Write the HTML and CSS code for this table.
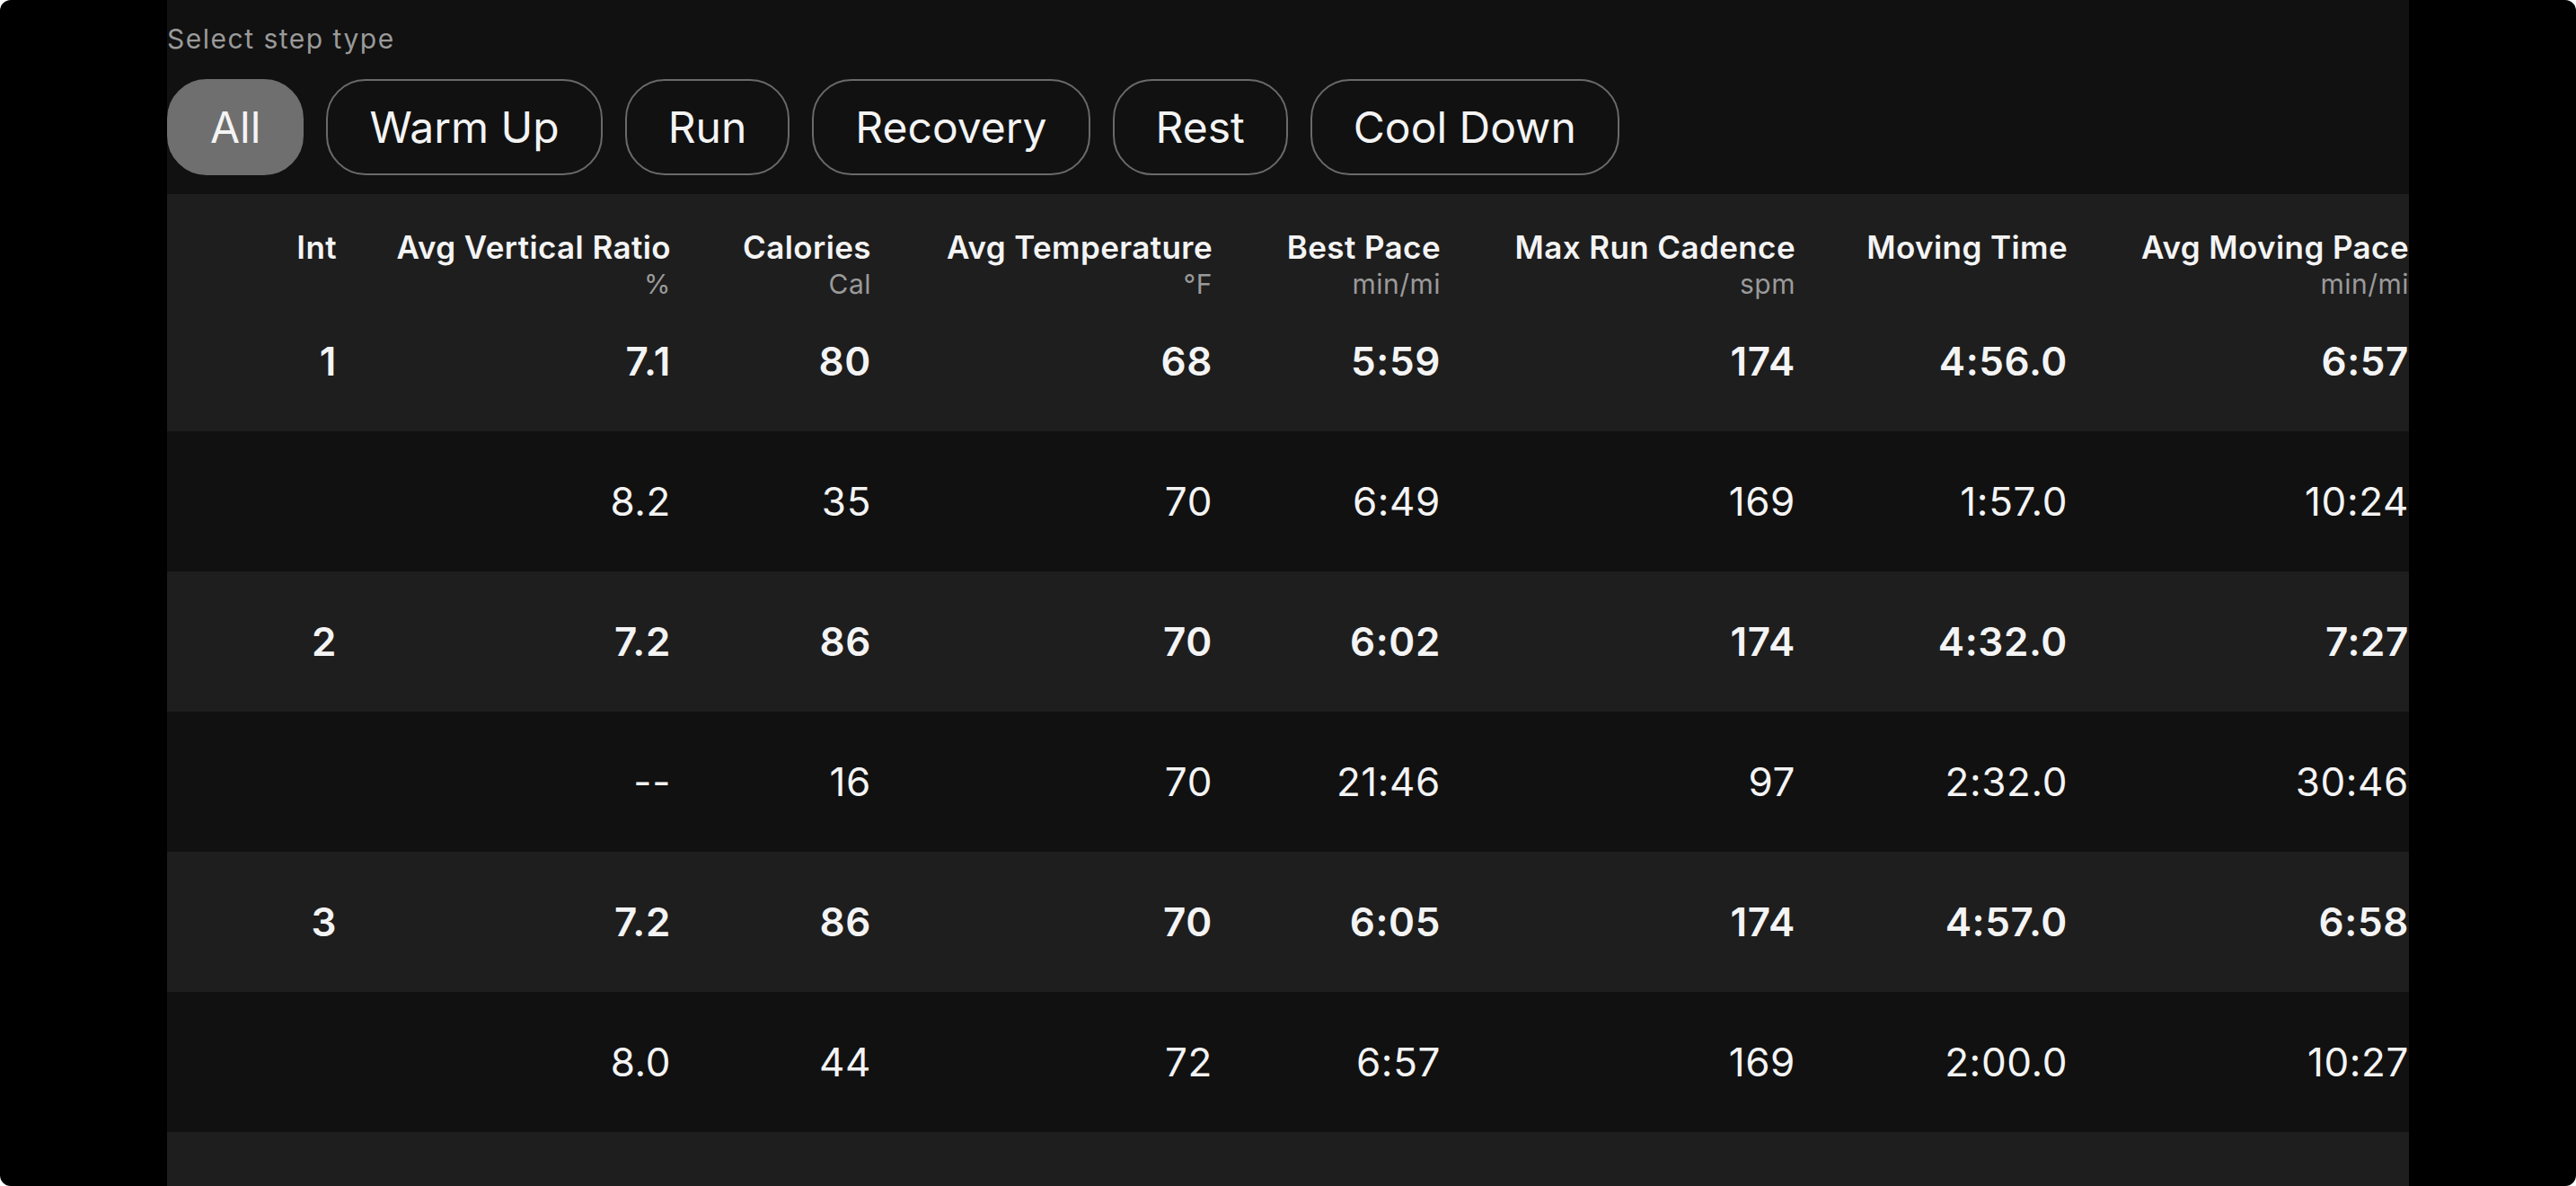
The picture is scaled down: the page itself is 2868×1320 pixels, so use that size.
FILE: index.html
```html
<!DOCTYPE html>
<html lang="en">
<head>
<meta charset="utf-8">
<title>Intervals</title>
<link rel="stylesheet" href="styles.css">
</head>
<body>
<div class="screen">
  <main class="content">
    <div class="step-label">Select step type</div>
    <div class="chips">
      <button class="chip chip-active">All</button>
      <button class="chip">Warm Up</button>
      <button class="chip">Run</button>
      <button class="chip">Recovery</button>
      <button class="chip">Rest</button>
      <button class="chip">Cool Down</button>
    </div>
    <div class="table">
      <div class="row head">
        <div class="cell"><div class="title">Int</div></div>
        <div class="cell"><div class="title">Avg Vertical Ratio</div><div class="unit">%</div></div>
        <div class="cell"><div class="title">Calories</div><div class="unit">Cal</div></div>
        <div class="cell"><div class="title">Avg Temperature</div><div class="unit">°F</div></div>
        <div class="cell"><div class="title">Best Pace</div><div class="unit">min/mi</div></div>
        <div class="cell"><div class="title">Max Run Cadence</div><div class="unit">spm</div></div>
        <div class="cell"><div class="title">Moving Time</div></div>
        <div class="cell"><div class="title">Avg Moving Pace</div><div class="unit">min/mi</div></div>
      </div>
      <div class="row main">
        <div class="cell">1</div><div class="cell">7.1</div><div class="cell">80</div><div class="cell">68</div><div class="cell">5:59</div><div class="cell">174</div><div class="cell">4:56.0</div><div class="cell">6:57</div>
      </div>
      <div class="row sub">
        <div class="cell"></div><div class="cell">8.2</div><div class="cell">35</div><div class="cell">70</div><div class="cell">6:49</div><div class="cell">169</div><div class="cell">1:57.0</div><div class="cell">10:24</div>
      </div>
      <div class="row main">
        <div class="cell">2</div><div class="cell">7.2</div><div class="cell">86</div><div class="cell">70</div><div class="cell">6:02</div><div class="cell">174</div><div class="cell">4:32.0</div><div class="cell">7:27</div>
      </div>
      <div class="row sub">
        <div class="cell"></div><div class="cell">--</div><div class="cell">16</div><div class="cell">70</div><div class="cell">21:46</div><div class="cell">97</div><div class="cell">2:32.0</div><div class="cell">30:46</div>
      </div>
      <div class="row main">
        <div class="cell">3</div><div class="cell">7.2</div><div class="cell">86</div><div class="cell">70</div><div class="cell">6:05</div><div class="cell">174</div><div class="cell">4:57.0</div><div class="cell">6:58</div>
      </div>
      <div class="row sub">
        <div class="cell"></div><div class="cell">8.0</div><div class="cell">44</div><div class="cell">72</div><div class="cell">6:57</div><div class="cell">169</div><div class="cell">2:00.0</div><div class="cell">10:27</div>
      </div>
      <div class="row main">
        <div class="cell">4</div><div class="cell">7.1</div><div class="cell">88</div><div class="cell">72</div><div class="cell">6:00</div><div class="cell">175</div><div class="cell">4:50.0</div><div class="cell">7:01</div>
      </div>
    </div>
  </main>
</div>
</body>
</html>
```
FILE: styles.css
```css
* { box-sizing: border-box; }
html, body { margin: 0; padding: 0; background: #ffffff; }
body { font-family: Inter, "Noto Sans", "Liberation Sans", sans-serif; }

.screen {
  width: 2868px;
  height: 1320px;
  background: #000000;
  border-radius: 12px;
  overflow: hidden;
  display: flex;
  justify-content: center;
}

.content {
  width: 2496px;
  height: 1320px;
  background: #111111;
  overflow: hidden;
  color: #f4f4f4;
}

.step-label {
  padding-top: 26px;
  font-size: 30px;
  line-height: 35px;
  letter-spacing: 1.5px;
  color: #9a9a9a;
}

.chips {
  display: flex;
  gap: 25px;
  margin-top: 27px;
  margin-bottom: 21px;
}

.chip {
  height: 107px;
  padding: 0 46px;
  border: 2px solid #6a6a6a;
  border-radius: 44px;
  background: transparent;
  color: #f4f4f4;
  font-family: Inter, "Noto Sans", "Liberation Sans", sans-serif;
  font-size: 48px;
  font-weight: 400;
  display: flex;
  align-items: center;
  justify-content: center;
}

.chip-active {
  background: #6f6f6f;
  border-color: #6f6f6f;
}

.row {
  display: grid;
  grid-template-columns: 189px 372px 223px 380px 254px 395px 303px 380px;
}

.cell {
  text-align: right;
  white-space: nowrap;
}

.head {
  height: 108px;
  background: #1e1e1e;
  padding-top: 39px;
}

.title {
  font-size: 35px;
  line-height: 40px;
  letter-spacing: 0.4px;
  font-weight: 600;
  color: #f4f4f4;
}

.unit {
  margin-top: 1px;
  font-size: 30px;
  line-height: 40px;
  letter-spacing: 0.5px;
  color: #9a9a9a;
}

.main, .sub {
  height: 156px;
  font-size: 44px;
  line-height: 156px;
  letter-spacing: 0.6px;
}

.main {
  background: #1e1e1e;
  font-weight: 600;
}

.sub {
  background: #111111;
  font-weight: 400;
}
```
